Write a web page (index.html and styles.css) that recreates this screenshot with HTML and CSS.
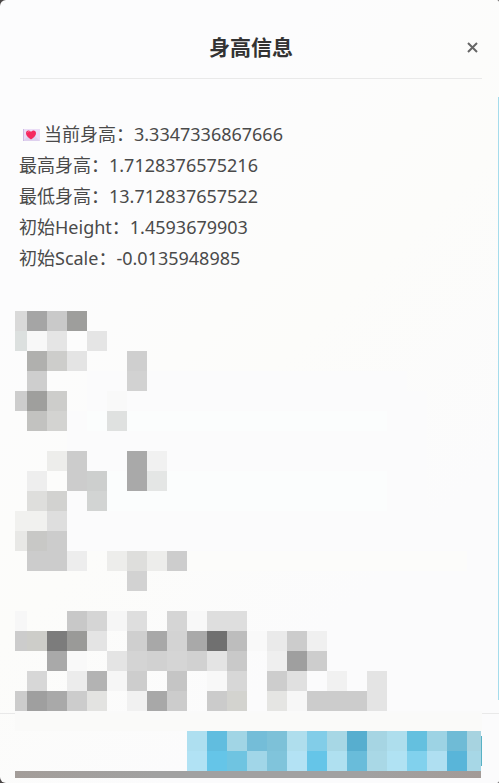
FILE: index.html
```html
<!DOCTYPE html>
<html lang="zh-CN">
<head>
    <meta charset="UTF-8">
    <title>身高信息</title>
    <meta name="viewport" content="width=device-width, initial-scale=1.0">
    <link rel="stylesheet" href="styles.css">
</head>
<body>
    <div class="modal">
        <!-- Title bar -->
        <header class="modal-header">
            <h1 class="modal-title">身高信息</h1>
            <button type="button" class="close-btn" aria-label="关闭">
                <svg width="13" height="13" viewBox="0 0 13 13"><path d="M2 2L11 11M11 2L2 11"/></svg>
            </button>
        </header>

        <!-- Height details -->
        <main class="modal-body">
            <div class="info">
                <p>
                    <svg class="letter-icon" viewBox="0 0 17 12">
                        <rect width="17" height="12" fill="#eadcf6"/>
                        <path d="M0 12L6 6H11L17 12Z" fill="#ded0ee"/>
                        <path d="M0 0H1V12H0Z" fill="#cdbbe4"/>
                        <path d="M8 10.5C5 8.5 3 6.500 3 4.200C3 1 6.500 .7 8 3C9.500 .7 13 1 13 4.200C13 6.500 11 8.500 8 10.500Z" fill="#f5285f"/>
                        <path d="M4.500 3.500Q5 2.200 6.500 2.600" fill="none" stroke="#ff719a"/>
                    </svg>当前身高：3.3347336867666
                </p>
                <p>最高身高：1.7128376575216</p>
                <p>最低身高：13.712837657522</p>
                <p>初始Height：1.4593679903</p>
                <p>初始Scale：-0.0135948985</p>
            </div>

            <!-- Masked details -->
            <svg class="mosaic" viewBox="15 311 467 402" shape-rendering="crispEdges">
                <path d="M87 371h320v20h20v160h-360v-140h20z" fill="#fbfbfc"/>
                <path d="M87 411h300v20h-300zM87 471h300v40h-300z" fill="#fbfdfd"/>
                <path d="M187 551h280v20h-280z" fill="#fcfcfa"/>

                <rect x="15" y="311" width="12" height="20" fill="#d9d9d9"/>
                <rect x="27" y="311" width="20" height="20" fill="#a5a5a5"/>
                <rect x="47" y="311" width="20" height="20" fill="#c9c9c9"/>
                <rect x="67" y="311" width="20" height="20" fill="#9e9e9c"/>

                <rect x="15" y="331" width="12" height="20" fill="#dce0df"/>
                <rect x="27" y="331" width="20" height="20" fill="#f8f8f8"/>
                <rect x="47" y="331" width="20" height="20" fill="#e5e5e5"/>
                <rect x="87" y="331" width="20" height="20" fill="#e5e5e5"/>

                <rect x="27" y="351" width="20" height="20" fill="#b0b0ae"/>
                <rect x="47" y="351" width="20" height="20" fill="#cdcdcb"/>
                <rect x="67" y="351" width="20" height="20" fill="#e4e4e4"/>
                <rect x="127" y="351" width="20" height="20" fill="#cfcfcf"/>

                <rect x="27" y="371" width="20" height="20" fill="#cecece"/>
                <rect x="127" y="371" width="20" height="20" fill="#d2d2d2"/>

                <rect x="15" y="391" width="12" height="20" fill="#cdcdcd"/>
                <rect x="27" y="391" width="20" height="20" fill="#9f9f9d"/>
                <rect x="47" y="391" width="20" height="20" fill="#cdcdcb"/>
                <rect x="107" y="391" width="20" height="20" fill="#f9f9f9"/>

                <rect x="27" y="411" width="20" height="20" fill="#c2c2c0"/>
                <rect x="47" y="411" width="20" height="20" fill="#d3d3d1"/>
                <rect x="107" y="411" width="20" height="20" fill="#dfe1e0"/>

                <rect x="47" y="451" width="20" height="20" fill="#ededeb"/>
                <rect x="67" y="451" width="20" height="40" fill="#cccccc"/>
                <rect x="127" y="451" width="20" height="40" fill="#a9a9a9"/>
                <rect x="147" y="451" width="20" height="20" fill="#f1f1f1"/>

                <rect x="27" y="471" width="20" height="20" fill="#eeeeee"/>
                <rect x="87" y="471" width="20" height="20" fill="#cdcfce"/>
                <rect x="147" y="471" width="20" height="20" fill="#e4e6e5"/>

                <rect x="27" y="491" width="20" height="20" fill="#dededc"/>
                <rect x="47" y="491" width="20" height="20" fill="#d2d2d0"/>
                <rect x="87" y="491" width="20" height="20" fill="#d2d4d3"/>

                <rect x="15" y="511" width="32" height="20" fill="#f1f1ef"/>
                <rect x="47" y="511" width="20" height="20" fill="#dedede"/>

                <rect x="15" y="531" width="12" height="20" fill="#e8e8e6"/>
                <rect x="27" y="531" width="20" height="20" fill="#c8c8c6"/>
                <rect x="47" y="531" width="20" height="20" fill="#cccccc"/>

                <rect x="27" y="551" width="40" height="20" fill="#cccccc"/>
                <rect x="67" y="551" width="20" height="20" fill="#ededed"/>
                <rect x="107" y="551" width="20" height="20" fill="#ededeb"/>
                <rect x="127" y="551" width="20" height="20" fill="#dededc"/>
                <rect x="147" y="551" width="20" height="20" fill="#ededeb"/>
                <rect x="167" y="551" width="20" height="20" fill="#cdcdcd"/>

                <rect x="127" y="571" width="20" height="20" fill="#d2d2d2"/>

                <rect x="15" y="611" width="12" height="20" fill="#f7f7f7"/>
                <rect x="67" y="611" width="20" height="20" fill="#c8c8c8"/>
                <rect x="87" y="611" width="20" height="20" fill="#d5d5d5"/>
                <rect x="107" y="611" width="20" height="20" fill="#f6f6f6"/>
                <rect x="127" y="611" width="20" height="20" fill="#dedede"/>
                <rect x="167" y="611" width="20" height="20" fill="#d5d5d5"/>
                <rect x="187" y="611" width="20" height="20" fill="#f8f8f8"/>
                <rect x="207" y="611" width="40" height="20" fill="#dedede"/>

                <rect x="15" y="631" width="12" height="20" fill="#cccccc"/>
                <rect x="27" y="631" width="20" height="20" fill="#cdcdc9"/>
                <rect x="47" y="631" width="20" height="20" fill="#7c7c7c"/>
                <rect x="67" y="631" width="20" height="20" fill="#9a9a98"/>
                <rect x="87" y="631" width="20" height="20" fill="#e4e4e4"/>
                <rect x="127" y="631" width="20" height="20" fill="#cfcfcf"/>
                <rect x="147" y="631" width="20" height="20" fill="#a8a8a8"/>
                <rect x="167" y="631" width="20" height="20" fill="#d3d3d3"/>
                <rect x="187" y="631" width="20" height="20" fill="#a9a9a9"/>
                <rect x="207" y="631" width="20" height="20" fill="#707070"/>
                <rect x="227" y="631" width="20" height="20" fill="#bdbdbd"/>
                <rect x="247" y="631" width="20" height="20" fill="#f9f9f9"/>
                <rect x="267" y="631" width="20" height="20" fill="#eaeaea"/>
                <rect x="287" y="631" width="20" height="20" fill="#cccccc"/>
                <rect x="307" y="631" width="20" height="20" fill="#f0f0f0"/>

                <rect x="47" y="651" width="20" height="20" fill="#a9a9a9"/>
                <rect x="67" y="651" width="20" height="20" fill="#f9f9f9"/>
                <rect x="107" y="651" width="20" height="20" fill="#e4e4e4"/>
                <rect x="127" y="651" width="20" height="20" fill="#d4d4d4"/>
                <rect x="147" y="651" width="20" height="20" fill="#d1d1d1"/>
                <rect x="167" y="651" width="20" height="20" fill="#d5d5d5"/>
                <rect x="187" y="651" width="20" height="20" fill="#d1d1d1"/>
                <rect x="207" y="651" width="20" height="20" fill="#e4e4e4"/>
                <rect x="227" y="651" width="20" height="20" fill="#c9c9c9"/>
                <rect x="267" y="651" width="20" height="20" fill="#efefef"/>
                <rect x="287" y="651" width="20" height="20" fill="#9f9f9f"/>
                <rect x="307" y="651" width="20" height="20" fill="#cdcdcd"/>

                <rect x="27" y="671" width="20" height="20" fill="#d7d7d7"/>
                <rect x="67" y="671" width="20" height="20" fill="#ececec"/>
                <rect x="87" y="671" width="20" height="20" fill="#b3b3b3"/>
                <rect x="107" y="671" width="20" height="20" fill="#f6f6f6"/>
                <rect x="127" y="671" width="20" height="20" fill="#cdcdcd"/>
                <rect x="167" y="671" width="20" height="20" fill="#c5c5c5"/>
                <rect x="207" y="671" width="20" height="20" fill="#f8f8f8"/>
                <rect x="227" y="671" width="20" height="20" fill="#d7d7d7"/>
                <rect x="267" y="671" width="20" height="20" fill="#cdcdcd"/>
                <rect x="287" y="671" width="20" height="20" fill="#e0e0e0"/>
                <rect x="327" y="671" width="20" height="20" fill="#f1f1f1"/>
                <rect x="367" y="671" width="20" height="40" fill="#e4e4e4"/>

                <rect x="15" y="691" width="12" height="20" fill="#cccccc"/>
                <rect x="27" y="691" width="20" height="20" fill="#9f9f9f"/>
                <rect x="47" y="691" width="20" height="20" fill="#a9a9a9"/>
                <rect x="67" y="691" width="20" height="20" fill="#cccccc"/>
                <rect x="87" y="691" width="20" height="20" fill="#e3e3e1"/>
                <rect x="127" y="691" width="20" height="20" fill="#f1f1f1"/>
                <rect x="147" y="691" width="20" height="20" fill="#a8a8a8"/>
                <rect x="167" y="691" width="20" height="20" fill="#cccccc"/>
                <rect x="207" y="691" width="20" height="20" fill="#cbcbcb"/>
                <rect x="227" y="691" width="20" height="20" fill="#d3d3cf"/>
                <rect x="267" y="691" width="20" height="20" fill="#e5e5e3"/>
                <rect x="287" y="691" width="20" height="20" fill="#f7f7f7"/>
                <rect x="307" y="691" width="60" height="20" fill="#cccccc"/>
                <rect x="15" y="711" width="467" height="2" fill="#fafafa"/>
            </svg>
        </main>

        <!-- Action area -->
        <footer class="modal-footer">
            <div class="footer-cover"></div>
            <button type="button" class="action-btn" aria-label="确定">
                <svg viewBox="187 731 295 40" shape-rendering="crispEdges">
                    <rect x="481" y="736" width="1" height="30" fill="#58b2c5"/>
                    <rect x="187" y="731" width="20" height="20" fill="#aedff0"/>
                    <rect x="207" y="731" width="20" height="20" fill="#61bddf"/>
                    <rect x="227" y="731" width="20" height="20" fill="#a1d5e5"/>
                    <rect x="247" y="731" width="20" height="20" fill="#74bdd8"/>
                    <rect x="267" y="731" width="20" height="20" fill="#7dc1d8"/>
                    <rect x="287" y="731" width="20" height="20" fill="#afdeed"/>
                    <rect x="307" y="731" width="20" height="20" fill="#82cde8"/>
                    <rect x="327" y="731" width="20" height="20" fill="#a7d7e5"/>
                    <rect x="347" y="731" width="20" height="20" fill="#57aecf"/>
                    <rect x="367" y="731" width="20" height="20" fill="#a6d5e3"/>
                    <rect x="387" y="731" width="20" height="20" fill="#aedeed"/>
                    <rect x="407" y="731" width="20" height="20" fill="#64c0df"/>
                    <rect x="427" y="731" width="20" height="20" fill="#9dd3e4"/>
                    <rect x="447" y="731" width="20" height="20" fill="#6fbbd6"/>
                    <rect x="467" y="731" width="14" height="20" fill="#a7d3e0"/>
                    <rect x="187" y="751" width="20" height="20" fill="#b1e2f4"/>
                    <rect x="207" y="751" width="20" height="20" fill="#65c5e8"/>
                    <rect x="227" y="751" width="20" height="20" fill="#6fc4e1"/>
                    <rect x="247" y="751" width="20" height="20" fill="#a1d6e8"/>
                    <rect x="267" y="751" width="20" height="20" fill="#80c4db"/>
                    <rect x="287" y="751" width="20" height="20" fill="#b3e2f4"/>
                    <rect x="307" y="751" width="20" height="20" fill="#65c5e8"/>
                    <rect x="327" y="751" width="20" height="20" fill="#afe0f0"/>
                    <rect x="347" y="751" width="20" height="20" fill="#69bcda"/>
                    <rect x="367" y="751" width="20" height="20" fill="#a9d8e6"/>
                    <rect x="387" y="751" width="20" height="20" fill="#b0e2f3"/>
                    <rect x="407" y="751" width="20" height="20" fill="#81d1ed"/>
                    <rect x="427" y="751" width="20" height="20" fill="#afdff1"/>
                    <rect x="447" y="751" width="20" height="20" fill="#59b5d9"/>
                    <rect x="467" y="751" width="14" height="20" fill="#a7d7e6"/>
                </svg>
            </button>
            <div class="footer-bar"></div>
        </footer>
    </div>
</body>
</html>
```

FILE: styles.css
```css
* {
    box-sizing: border-box;
    margin: 0;
    padding: 0;
}

body {
    font-family: "Noto Sans", "Noto Sans CJK SC", sans-serif;
    background-color: #4a4646;
    color: #4a4a4a;
}

.modal {
    position: relative;
    display: flex;
    flex-direction: column;
    min-height: 100vh;
    background: linear-gradient(135deg, #fcfcfd 25%, #fcfcfa 50%, #fbfbfc 75%);
    border-radius: 6px 2px 2px 6px;
}

/* Blue edge that shows along the right side */
.modal::after {
    content: "";
    position: absolute;
    top: 97px;
    right: 0;
    bottom: 83px;
    width: 1px;
    background-color: #a5dcec;
}

/* Header */
.modal-header {
    display: grid;
    grid-template-columns: 20px 1fr 20px;
    align-items: center;
    margin: 0 17px 0 20px;
    padding: 30px 0 14px;
    border-bottom: 1px solid #e9e9e9;
}

.modal-title {
    grid-column: 2;
    text-align: center;
    font-size: 21px;
    line-height: 34px;
    font-weight: 700;
    color: #333333;
}

.close-btn {
    display: flex;
    justify-content: center;
    align-items: center;
    height: 34px;
    border: none;
    background: none;
    cursor: pointer;
}

.close-btn path {
    fill: none;
    stroke: #666666;
    stroke-width: 2;
}

/* Body */
.modal-body {
    flex: 1;
    padding: 40px 17px 0 15px;
}

.info {
    padding-left: 4px;
    margin-bottom: 37px;
    font-size: 18px;
    line-height: 31px;
}

.letter-icon {
    width: 17px;
    height: 12px;
    margin: 0 4px;
}

.mosaic {
    display: block;
    width: 100%;
}

/* Footer */
.modal-footer {
    padding: 0 17px 5px 15px;
    border-top: 1px solid #e9e9e9;
}

.footer-cover {
    height: 18px;
    margin-top: -1px;
    background-color: #fafaf9;
}

.action-btn {
    display: block;
    width: 295px;
    margin-left: auto;
    border: none;
    background: none;
    cursor: pointer;
}

.action-btn svg {
    display: block;
    width: 100%;
}

.footer-bar {
    height: 7px;
    margin-right: 1px;
    background: linear-gradient(90deg, #a39d99, #a1a1a1 30%, #a1a1a1 75%, #a39b97);
}
```
